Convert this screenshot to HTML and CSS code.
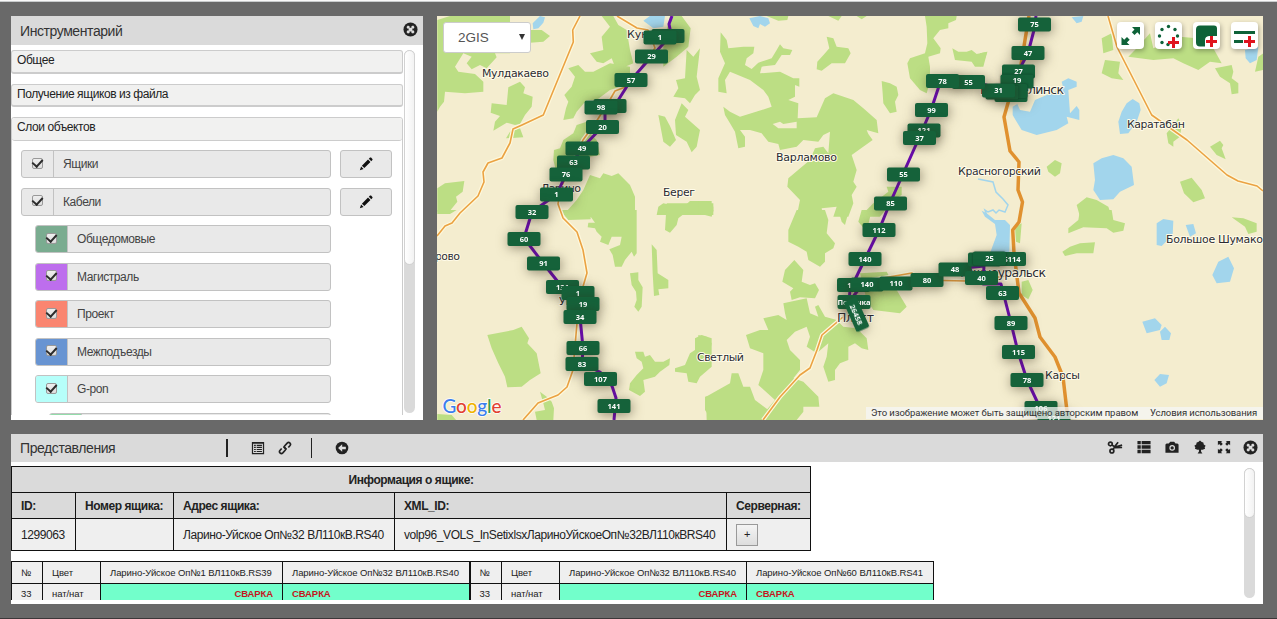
FILE: index.html
```html
<!DOCTYPE html>
<html lang="ru">
<head>
<meta charset="utf-8">
<title>Инструментарий</title>
<link rel="stylesheet" href="styles.css">
</head>
<body>
<svg class="defs" width="0" height="0">
  <defs>
    <symbol id="i-close" viewBox="0 0 16 16"><circle cx="8" cy="8" r="7.500"/><path fill="#dedede" d="M5.200 3.800 7 4.400V6h2V4.400L10.800 3.800 12.200 5.200 11.600 7H10v2h1.600L12.200 10.800 10.800 12.200 9 11.600V10H7v1.600L5.200 12.200 3.800 10.800 4.400 9H6V7H4.400L3.800 5.200z"/></symbol>
    <symbol id="i-pencil" viewBox="0 0 16 16"><path d="M1 15l1.400-4.200 2.800 2.800zM3.300 9.900 10.300 2.900 13.100 5.700 6.100 12.700zM11.200 2 12.600.7q.6-.5 1.200 0l1.500 1.500q.5.6 0 1.200L14 4.800z"/></symbol>
    <symbol id="i-listalt" viewBox="0 0 16 16"><path fill-rule="evenodd" d="M1 1h14v14H1zM2.400 3v10.600h11.200V3z"/><path d="M3.500 4.200h2v1.400h-2zm3 0h6v1.400h-6zM3.500 6.600h2V8h-2zm3 0h6V8h-6zM3.500 9h2v1.400h-2zm3 0h6v1.400h-6zM3.500 11.300h2v1.400h-2zm3 0h6v1.400h-6z"/></symbol>
    <symbol id="i-link" viewBox="0 0 16 16"><g fill="none" stroke="#222" stroke-width="1.900"><path d="M9.800 9.600 8 8.200Q6.600 6.900 7.800 5.400L10.500 2.400Q12 1 13.600 2.300 15 3.700 13.800 5.200L11.800 7.400"/><path d="M6.200 6.400 8 7.800Q9.400 9.100 8.200 10.600L5.500 13.600Q4 15 2.400 13.700 1 12.300 2.200 10.800L4.200 8.600"/></g></symbol>
    <symbol id="i-back" viewBox="0 0 16 16"><circle cx="8" cy="8" r="7.200"/><path fill="#dedede" d="M8.200 3.600v2.900h4.200v3H8.200v2.900L3.500 8z"/></symbol>
    <symbol id="i-cut" viewBox="0 0 18 16"><g fill="none" stroke="#222" stroke-width="1.900"><circle cx="3.800" cy="4" r="2.100"/><circle cx="5.500" cy="12" r="2.200"/><path d="M5.500 5.200 9 7.400 17 5.400M6.800 10.200 9.600 5.800 12.500 2M9 8.200 17 8"/></g></symbol>
    <symbol id="i-list" viewBox="0 0 16 16"><path d="M.5 1h3.800v3.800H.5zm4.800 0H15.500v3.800H5.300zM.5 6.100h3.800v3.800H.5zm4.800 0H15.500v3.800H5.300zM.5 11.200h3.800V15H.5zm4.800 0H15.500V15H5.300z"/></symbol>
    <symbol id="i-camera" viewBox="0 0 16 16"><path d="M.5 5.200 1.800 4H4.300L6 2h4.500L12 4h2.200L15.500 5.200V14.500H.5z"/><circle cx="8.200" cy="9" r="3.200" fill="#dedede"/><circle cx="8.200" cy="9" r="1.900"/></symbol>
    <symbol id="i-tree" viewBox="0 0 16 16"><path d="M8 .5 10 2.200 11.800 2.800 12.300 5 14.500 6.500 13.300 8.300 13.800 10 11 11.200H9.200v1.800l1.500 2.500h-5.400L6.800 13v-1.800H5L2.200 10 2.700 8.300 1.500 6.500 3.700 5 4.200 2.800 6 2.200z"/></symbol>
    <symbol id="i-full" viewBox="0 0 16 16"><path d="M1 1h5L4.600 2.400 6.600 4.500 4.500 6.600 2.400 4.600 1 6zM15 1v5l-1.400-1.400-2.100 2-2.100-2.100 2-2.100L10 1zM1 15v-5l1.400 1.400 2.100-2 2.100 2.100-2 2.100L6 15zM15 15h-5l1.400-1.400-2-2.100 2.100-2.100 2.100 2L15 10z"/></symbol>
    <rect id="t" class="plate" x="-16.500" y="-7" width="33" height="14" rx="2"/>
  </defs>
</svg>

<div class="app">
  <div class="top">
    <section class="panel tools">
      <header class="bar"><h1>Инструментарий</h1><svg class="ic"><use href="#i-close"/></svg></header>
      <div class="scroller">
        <div class="content">
          <div class="acc">Общее</div>
          <div class="acc">Получение ящиков из файла</div>
          <div class="group">
            <div class="acc-head">Слои объектов</div>
            <div class="rows">
              <div class="row"><div class="field"><span class="check"><i class="cb"></i></span><span class="name">Ящики</span></div><span class="edit"><svg><use href="#i-pencil"/></svg></span></div>
              <div class="row"><div class="field"><span class="check"><i class="cb"></i></span><span class="name">Кабели</span></div><span class="edit"><svg><use href="#i-pencil"/></svg></span></div>
              <div class="row sub"><div class="field"><span class="check green"><i class="cb"></i></span><span class="name">Общедомовые</span></div></div>
              <div class="row sub"><div class="field"><span class="check violet"><i class="cb"></i></span><span class="name">Магистраль</span></div></div>
              <div class="row sub"><div class="field"><span class="check coral"><i class="cb"></i></span><span class="name">Проект</span></div></div>
              <div class="row sub"><div class="field"><span class="check blue"><i class="cb"></i></span><span class="name">Межподъезды</span></div></div>
              <div class="row sub"><div class="field"><span class="check aqua"><i class="cb"></i></span><span class="name">G-pon</span></div></div>
              <div class="row subsub"><div class="field"><span class="check mint"></span><span class="name"></span></div></div>
            </div>
          </div>
        </div>
        <div class="track"><div class="thumb"></div></div>
      </div>
    </section>

    <section class="map">
      <svg class="canvas" viewBox="437 16 826 404" width="826" height="404">
        <g class="wood">
          <g transform="translate(430 0) scale(.33333)">
            <path d="M22 60 60 48H240V160H195L200 172 170 205 150 195 125 208 110 190 125 170 100 160 75 200 85 215 135 222 160 245V275L105 280 45 275 42 305 30 320 22 335zM300 90H335L360 108 340 125 300 128zM235 262 270 245 285 262 280 280 308 290 305 320 285 345 270 372 255 375 230 368 190 392 195 365 210 348 182 338 185 310 230 315zM240 395 270 385 280 412 228 415zM480 160 520 150 515 110 540 80 515 48H550L565 75 590 90 600 150 610 190 575 205 555 200 545 175 520 190 500 185zM415 205 445 195 465 215 490 215 540 190 600 200V250L540 270 500 300 470 300 440 335 430 355 400 360 408 325 415 305 403 285 425 260 435 230zM720 48H755L782 85 775 140 740 170 700 200V130zM770 150 790 170 810 145 800 230 810 270 795 285 780 310 765 295 730 290 745 265 738 240 765 235zM685 345 705 350 720 378 738 420 720 440 700 425zM738 405 735 360 755 310 775 330 765 350 810 390 800 440 785 457 770 425zM372 450 390 445 400 420 430 400 440 375 470 365 480 400 500 420 510 465 480 470 440 520 380 520 370 480zM22 565 45 550 103 543 98 575 78 590 82 605 60 632 22 635zM480 525 510 535 520 520 545 528 565 520 600 555 615 590V645H400L440 600 460 570zM685 620 700 610 735 618 770 612 780 603H845V645H680z"/>
          </g>
          <g transform="translate(430 210) scale(.33333)">
            <path d="M390 0H620V130L612 140 605 125 585 150 575 170H555L548 135 538 118 570 105 575 80 545 80 535 105 510 95 515 80 500 65 495 55 473 52 475 38 495 38 482 20V28L415 30zM22 0H80L60 12H22zM710-20 850-20V5L790 10 770 5 745 25 740 45 720 68 705 60zM665 103 680 120 683 190 715 210V235L685 238 688 255 672 258 668 190zM600 190 625 187V210L638 232 635 290 625 305 613 290 620 270 618 245 605 225zM172 375 250 360 275 350 297 385 292 400 320 430 332 490 300 510 275 530 232 532 225 500 205 460 185 415zM615 425 640 425 645 440 660 435 675 455 700 455 720 445 718 465 690 485 675 500 640 510 645 545 630 558 597 540 600 520 620 495 640 475 635 455 620 445zM735 475 765 465 780 430 795 420V385L815 375 845 385V470L810 500 800 520 775 515 770 490 735 485zM330 545 350 560 365 575 372 595 370 630H320L315 605 345 600 340 580zM22 612 65 615 80 632H22zM825 560 845 556V630L825 600z"/>
          </g>
          <g transform="translate(700 0) scale(.33333)">
            <path d="M200 48H265L262 60 235 62zM385 48H425L415 62zM470 48H500L485 58zM62 97 80 120 85 145 130 140H163L160 160 140 175 135 195 155 207 175 188 215 175 230 150 240 133 250 145 277 150 270 165 245 165 225 195 185 200 180 220 240 215 280 235 298 235V260L285 255V290L265 300 295 310 293 355 350 352 375 295 400 280 460 300 490 325 530 360 535 400 500 390 505 402 518 420 455 465 470 510 460 545 470 560 455 585 460 610 445 650H400L410 620 365 625 370 650H290L300 600 262 560 265 535 330 480 345 445 370 440 385 460 390 395 370 405 355 425 310 420 290 440 240 450 235 432 205 425 185 400 150 390 120 390 135 410V440L115 445 105 395 90 370 75 345 70 320 90 335 120 350 185 330 215 320 205 290 190 270 150 240 90 215 75 240 80 280 55 275 55 235 75 190 60 155zM380 110 400 115 410 140 445 145 452 160 435 190 395 190 365 212 350 208 352 185 375 160 388 145zM545 243 570 250 590 260 595 285 585 305 590 335 570 340 550 310 548 280zM675 48H770L768 60 745 70V85L720 90 700 115 722 145 720 160 685 170 690 200V245L680 280 660 270 630 235 622 190 630 175 675 160 682 130 680 80zM757 145 775 155 800 155 815 150 830 162 862 155 850 200 825 200 815 185 765 180zM520 610 565 575 560 560 605 560V585L580 600 540 650H480zM-5 605 20 603 40 620V645H-5z"/>
            <path class="land" d="M218 372 240 365 250 372 290 365V385H235z"/>
          </g>
          <g transform="translate(700 210) scale(.33333)">
            <path d="M290 0H375L385 30 380 70 405 100 400 115 375 130 375 155 360 170 325 150 320 125 295 110 265 95V60zM415 0H447L435 45 425 35zM-5 0H40L35 20-5 10zM485 0H515L500 65 475 35zM283 150 310 180 305 215 330 225 345 220 357 240 345 265 300 262 275 270 270 245 280 235 247 215 255 180zM250 280 320 265 330 310 355 320 345 290 355 285 375 320 410 330 430 350 470 355 500 385 505 420 485 415 465 400 445 410V450L420 460 405 480V510L385 515 370 470 380 440 385 400 350 430 320 410 330 380 320 350 285 365 260 390 270 420 300 450V480L280 505 310 515 355 560 358 590 310 590 310 605 290 630H190L200 600 225 570 175 525 190 480 190 430 150 415 138 375 180 360 205 360 190 325 235 315 260 330 255 310zM18 560 90 520 95 490H115L130 530H150L165 570 205 600 185 630H20zM-5 375 20 380 35 400 30 425-5 430zM480 190 560 185 590 240 620 290 600 310 520 300 500 270z"/>
          </g>
          <g transform="translate(980 0) scale(.33333)">
            <path d="M0 160 22 155 10 190 0 200zM365 115 395 100 400 150 370 160zM375 180 420 185 415 220 430 240 395 235 365 220zM445 170 470 145 510 100 520 145 600 110 650 115 700 145 725 190 690 185 655 210 610 190 580 175 520 180zM705 205 755 195 760 215 755 235 775 250V280L755 283 750 250 720 230zM835 170 850 160V210L825 215zM690 440 720 422 730 435 725 445 737 478 710 465zM600 545 635 533 665 570 675 595 640 607 612 580zM200 500 225 480 245 490 240 520 225 530 205 515zM290 615 320 592 350 600 385 620 395 650H300zM560 400 580 375 595 355 605 375 600 410 580 425V440L565 430z"/>
          </g>
          <g transform="translate(980 210) scale(.33333)">
            <path d="M300 0H395L400 30 435 40 430 62 400 68 380 55 310 52 265 70V55L295 30zM247 125 270 110 300 100 345 97 340 130 290 130 255 138zM755 22 790 25 830 40V65L805 72 795 50zM125 215 145 210 158 240 145 268 125 255zM105 50 125 40 120 100 108 95z"/>
          </g>
        </g>
        <g class="water">
          <path transform="translate(430 0) scale(.33333)" d="M310 88 308 70 330 48 345 52 340 68 325 85zM640 62 660 48H705L700 80 670 85z"/>
          <path transform="translate(700 0) scale(.33333)" d="M148 55 180 48 205 55 210 70 195 80 180 72 175 85 160 78z"/>
          <path transform="translate(980 0) scale(.33333)" d="M275 52 310 48 305 65 290 70zM795 150 835 140 830 180 810 190 797 175zM98 320 112 312 120 330 150 335 165 300 200 285 250 265 245 245 265 235 290 245V260L265 270 270 340 290 318 298 330V360L260 350 265 370 230 390 170 405 125 390 108 362 98 345zM440 310 458 297 478 310 482 330 470 365 445 400 420 402 415 365 425 335zM340 490 365 475 400 465 430 475 455 500 462 555 420 575 400 598 360 600 340 570 345 540z"/>
          <path transform="translate(980 210) scale(.33333)" d="M530 40 550 27 580 32 578 75 545 108 530 105zM617 45 640 42 648 70 630 80zM697 195 715 155 745 140 762 175 750 215 710 220zM487 335 525 325 545 345 540 360 500 370zM540 365 555 350 573 370 568 390 545 390zM523 510 540 492 567 495 560 520 540 530zM5 2 20 10 45 30 75 30 90 45 88 130 30 130 50 75 45 42 15 20z"/>
          <path class="river" d="M978 179 993 182 996 192 1003 199 1008 205 1005 212 999 210 996 213 993 210 988 212 985 210 987 216"/>
        </g>
        <g>
          <path class="casing" d="M580 16 572.700 30 573.300 42 543.300 115 522 125 513 129 510 143 502 158 488 163 483 172 484 182 478 196 460 213 452 223 445 226 437 236M617 16 637 28 648 30 655 48 628 86 615 91 608 103 596 122 583 140 560 190 558 204 563 218 577 232 583 250 587 273 582 290M577 323 573 370 567 387 558 395 538 403 523 420M843 317 822 335 817 350 810 368 800 375 780 397 763 420M852 292 860 282 912 273 920 280 966 281 1015 275M1108 16 1117 47 1151.700 115 1187 140 1227 175 1238 181 1257 186 1263 191"/>
          <path class="road" d="M580 16 572.700 30 573.300 42 543.300 115 522 125 513 129 510 143 502 158 488 163 483 172 484 182 478 196 460 213 452 223 445 226 437 236M617 16 637 28 648 30 655 48 628 86 615 91 608 103 596 122 583 140 560 190 558 204 563 218 577 232 583 250 587 273 582 290M577 323 573 370 567 387 558 395 538 403 523 420M843 317 822 335 817 350 810 368 800 375 780 397 763 420M852 292 860 282 912 273 920 280 966 281 1015 275M1108 16 1117 47 1151.700 115 1187 140 1227 175 1238 181 1257 186 1263 191"/>
          <path class="highway" d="M1029 16 1025 40 1021 65 1008 103 1004 117 1010 151 1019 162 1018 190 1022.500 202 1019 222 1012.700 230 1014 253 1019 293 1035 318 1040 337 1055 357 1063 377 1068 420"/>
        </g>
        <g class="place">
          <text x="482" y="77" textLength="67">Мулдакаево</text><text x="627" y="37.500">Кунашак</text><text x="541" y="191.500" textLength="40">Ларино</text><text x="663" y="196" textLength="32">Берег</text><text x="435" y="260" textLength="25">рово</text><text x="559" y="305">Уйское</text><text x="776" y="160.500" textLength="61">Варламово</text><text x="697" y="361" textLength="47">Светлый</text><text x="958" y="174.500" textLength="83">Красногорский</text><text x="1127" y="127.500" textLength="58">Каратабан</text><text x="1166" y="243" textLength="97">Большое Шумако</text><text x="1045" y="379" textLength="35">Карсы</text>
          <g class="city"><text x="837" y="322" textLength="37">Пласт</text><text x="980" y="94" textLength="84">Еманжелинск</text><text x="960" y="277" textLength="86">Южноуральск</text></g>
        </g>
        <path class="route" d="M672 16 669 24 671 34 663 44 652 56 631 80 617 102 605 112V124L582 148 566 174 557 194 532 212 524 238 543 263 562 287 580 317 583 348 582 364 600 372 612 386 616 398 614 420M1036 16 1034 30 1028 53 1018 72 1000 89 968 80 942 77 931 110 919 138 903 174 890 203 879 230 865 259 850 290 849 302 862 285 927 280 955 269 984 266 983 284H1001L1011 323 1018 352 1027 380 1042 412"/>
        <g class="tags">
          <g transform="translate(668 36)"><use href="#t"/></g>
          <g transform="translate(660 37.500)"><use href="#t"/><text>1</text></g>
          <g transform="translate(651.500 56.500)"><use href="#t"/><text>29</text></g>
          <g transform="translate(631 80)"><use href="#t"/><text>57</text></g>
          <g transform="translate(610 106)"><use href="#t"/></g>
          <g transform="translate(601 107.500)"><use href="#t"/><text>98</text></g>
          <g transform="translate(602.500 127)"><use href="#t"/><text>20</text></g>
          <g transform="translate(582 148.500)"><use href="#t"/><text>49</text></g>
          <g transform="translate(573.500 162.500)"><use href="#t"/><text>63</text></g>
          <g transform="translate(566 174.500)"><use href="#t"/><text>76</text></g>
          <g transform="translate(556.500 194.500)"><use href="#t"/><text>1</text></g>
          <g transform="translate(532 212)"><use href="#t"/><text>32</text></g>
          <g transform="translate(524 239)"><use href="#t"/><text>60</text></g>
          <g transform="translate(543.500 263.500)"><use href="#t"/><text>91</text></g>
          <g transform="translate(562.500 287)"><use href="#t"/><text>131</text></g>
          <g transform="translate(578 293)"><use href="#t"/><text>1</text></g>
          <g transform="translate(583 304)"><use href="#t"/><text>19</text></g>
          <g transform="translate(580 317)"><use href="#t"/><text>34</text></g>
          <g transform="translate(583 348)"><use href="#t"/><text>66</text></g>
          <g transform="translate(582 364)"><use href="#t"/><text>83</text></g>
          <g transform="translate(600.500 379)"><use href="#t"/><text>107</text></g>
          <g transform="translate(614 406)"><use href="#t"/><text>141</text></g>
          <g transform="translate(1034.500 24.500)"><use href="#t"/><text>75</text></g>
          <g transform="translate(1028 53)"><use href="#t"/><text>47</text></g>
          <g transform="translate(1018.500 71.500)"><use href="#t"/><text>27</text></g>
          <g transform="translate(1011 95)"><use href="#t"/></g>
          <g class="flat" transform="translate(1017 81.500)"><use href="#t"/><text y="-1">19</text></g>
          <g class="flat" transform="translate(1011 91)"><use href="#t"/></g>
          <g class="flat" transform="translate(1002 92.500)"><use href="#t"/></g>
          <g transform="translate(998.500 90.500)"><use href="#t"/><text>31</text></g>
          <g transform="translate(968.500 82)"><use href="#t"/><text>55</text></g>
          <g transform="translate(942.500 81)"><use href="#t"/><text>78</text></g>
          <g transform="translate(931.500 110)"><use href="#t"/><text>99</text></g>
          <g transform="translate(924 130.500)"><use href="#t"/><text>121</text></g>
          <g transform="translate(919.500 138)"><use href="#t"/><text>37</text></g>
          <g transform="translate(903.500 174.500)"><use href="#t"/><text>55</text></g>
          <g transform="translate(890.500 203.500)"><use href="#t"/><text>85</text></g>
          <g transform="translate(879 230)"><use href="#t"/><text>112</text></g>
          <g transform="translate(865 259)"><use href="#t"/><text>140</text></g>
          <g transform="translate(853.500 285)"><use href="#t"/><text x="-4">1</text></g>
          <g transform="translate(867 284.500)"><use href="#t"/><text>140</text></g>
          <g transform="translate(896 283.500)"><use href="#t"/><text>110</text></g>
          <g transform="translate(927 280)"><use href="#t"/><text>80</text></g>
          <g transform="translate(955 269.500)"><use href="#t"/><text>48</text></g>
          <g transform="translate(1009.500 259)"><use href="#t"/><text x="2.500">5114</text></g>
          <g transform="translate(984.500 259.500)"><use href="#t"/></g>
          <g class="flat" transform="translate(989.500 258.500)"><use href="#t"/><text>25</text></g>
          <g transform="translate(981.500 278)"><use href="#t"/><text>40</text></g>
          <g transform="translate(1002.500 293)"><use href="#t"/><text>63</text></g>
          <g transform="translate(1011 323)"><use href="#t"/><text>89</text></g>
          <g transform="translate(1018.500 352)"><use href="#t"/><text>115</text></g>
          <g transform="translate(1027 380)"><use href="#t"/><text>78</text></g>
          <g transform="translate(1041 408)"><use href="#t"/><text>106</text></g>
          <g transform="translate(1054 418)"><use href="#t"/><text>121</text></g>
          <g transform="translate(854 302)"><use href="#t"/><text textLength="33">Полочка</text></g>
          <g transform="translate(856.500 314.500) rotate(66)"><use href="#t"/><text>26458</text></g>
        </g>
        <g class="logo"><text x="442.500" y="413" textLength="59"><tspan fill="#3b7ded">G</tspan><tspan fill="#e2412f">o</tspan><tspan fill="#f0b400">o</tspan><tspan fill="#3b7ded">g</tspan><tspan fill="#2f9e4f">l</tspan><tspan fill="#e2412f">e</tspan></text></g>
      </svg>
      <div class="over controls">
        <div class="select"><span>2GIS</span><i></i></div>
        <div class="buttons">
          <span class="mb"><svg viewBox="0 0 27 27"><path fill="#0e6238" d="M23 5v8L20.300 10.300 17.500 13 14.800 10.300 17.500 7.600 15 5zM4.500 23v-8L7.200 17.700 10 15 12.700 17.700 9.900 20.400 12.500 23z"/></svg></span>
          <span class="mb"><svg viewBox="0 0 27 27"><g fill="#0e6238"><circle cx="13.500" cy="4.500" r="1.700"/><circle cx="7" cy="7.500" r="1.700"/><circle cx="20" cy="7.500" r="1.700"/><circle cx="4.500" cy="14" r="1.700"/><circle cx="22.500" cy="14" r="1.700"/><circle cx="7" cy="20.500" r="1.700"/><circle cx="13" cy="22.500" r="1.700"/></g><path class="plus" d="M13 20.500h11M18.500 15v11"/></svg></span>
          <span class="mb"><svg viewBox="0 0 27 27"><path fill="#0e6238" d="M7 3.500H21Q24 3.500 24 6.500V14H16Q12 14.500 12 18V24.500H7Q3 24.500 3 20.500V7.500Q3 3.500 7 3.500z"/><path class="plus" d="M13 19.500h11M18.500 14v11"/></svg></span>
          <span class="mb"><svg viewBox="0 0 27 27"><path stroke="#0e6238" stroke-width="3" d="M3 10.500H24M3 19.500h9"/><path class="plus" d="M13 19.500h11M18.500 14v11"/></svg></span>
        </div>
      </div>
      <div class="over copyright"><span class="c1">Это изображение может быть защищено авторским правом</span><span class="c2">Условия использования</span></div>
    </section>
  </div>

  <section class="panel views">
    <header class="bar">
      <div class="left"><h1>Представления</h1><i class="sep s1"></i><svg class="ic"><use href="#i-listalt"/></svg><svg class="ic link"><use href="#i-link"/></svg><i class="sep s2"></i><svg class="ic"><use href="#i-back"/></svg></div>
      <div class="right"><svg class="ic wide"><use href="#i-cut"/></svg><svg class="ic"><use href="#i-list"/></svg><svg class="ic"><use href="#i-camera"/></svg><svg class="ic"><use href="#i-tree"/></svg><svg class="ic near"><use href="#i-full"/></svg><svg class="ic big"><use href="#i-close"/></svg></div>
    </header>
    <div class="body">
      <div class="tables">
        <table class="info">
          <colgroup><col class="w64"><col class="w98"><col class="w221"><col class="w332"><col class="w84"></colgroup>
          <tr><th colspan="5" class="title">Информация о ящике:</th></tr>
          <tr><th>ID:</th><th>Номер ящика:</th><th>Адрес ящика:</th><th>XML_ID:</th><th>Серверная:</th></tr>
          <tr class="data"><td>1299063</td><td></td><td>Ларино-Уйское Оп№32 ВЛ110кВ.RS40</td><td>volp96_VOLS_InSetixlsxЛариноУйскоеОп№32ВЛ110кВRS40</td><td><span class="add">+</span></td></tr>
        </table>
        <table class="fibers">
          <colgroup><col class="w31"><col class="w58"><col class="w182"><col class="w187"><col class="w32"><col class="w58"><col class="w187"><col class="w187"></colgroup>
          <tr><td>№</td><td>Цвет</td><td>Ларино-Уйское Оп№1 ВЛ110кВ.RS39</td><td class="end">Ларино-Уйское Оп№32 ВЛ110кВ.RS40</td><td>№</td><td>Цвет</td><td>Ларино-Уйское Оп№32 ВЛ110кВ.RS40</td><td>Ларино-Уйское Оп№60 ВЛ110кВ.RS41</td></tr>
          <tr class="last"><td>33</td><td>нат/нат</td><td class="weld r">СВАРКА</td><td class="weld end">СВАРКА</td><td>33</td><td>нат/нат</td><td class="weld r">СВАРКА</td><td class="weld">СВАРКА</td></tr>
        </table>
      </div>
      <div class="track"><div class="thumb"></div></div>
    </div>
  </section>
</div>
</body>
</html>
```
FILE: styles.css
```css
* { box-sizing: border-box; }
body {
  margin: 0;
  font-family: "Liberation Sans", Arial, sans-serif;
  font-size: 12px;
  letter-spacing: -.42px;
  color: #333;
}
.defs { position: absolute; }
.app {
  width: 1277px;
  height: 619px;
  background: #696969;
  border-top: 1px solid #fafafa;
  border-bottom: 1px solid #3c3739;
  box-shadow: inset 0 1px #c9cccd;
  padding: 15px 14px 14px 11px;
  display: flex;
  flex-direction: column;
  gap: 14px;
  overflow: hidden;
}
.top { display: flex; gap: 14px; height: 404px; }
.panel { background: #fff; display: flex; flex-direction: column; overflow: hidden; }
.tools { width: 412px; }
.views { height: 171px; }
.bar {
  height: 29px;
  flex: none;
  background: #dadada;
  display: flex;
  align-items: center;
  justify-content: space-between;
  padding: 0 5px 0 9px;
}
.views .bar { height: 28px; }
.bar h1 { margin: 0; font-size: 14px; font-weight: 400; width: 102px; white-space: nowrap; }
.views h1 { width: 95px; }
.ic { width: 14px; height: 14px; fill: #222; }
.tools .ic { width: 15px; height: 15px; margin-top: -2px; }
.left, .right { display: flex; align-items: center; }
.sep { width: 1.500px; height: 18px; background: #222; }
.s1 { margin: 0 23px 0 111px; }
.s2 { margin: 0 23px 0 19px; height: 20px; }
.link { margin-left: 13px; }
.right { gap: 14px; margin-top: -2px; }
.wide { width: 16px; height: 15px; }
.near { margin-left: -4px; }
.big { width: 15px; height: 15px; margin-left: -2px; }

.scroller { display: flex; height: 370px; padding: 5px 8px 0 0; gap: 1px; }
.content { width: 392px; height: 365px; overflow: hidden; }
.acc, .acc-head {
  height: 23.500px;
  background: #f1f1f0;
  border: 1px solid #ccc;
  border-radius: 3px;
  padding: 2px 5px;
  line-height: 15px;
  color: #222;
}
.acc { margin-bottom: 10px; border-bottom-width: 2px; }
.group { border: 1px solid #ccc; border-radius: 3px; height: 420px; }
.acc-head { border-width: 0 0 1px; height: 23px; }
.rows { padding: 9px 9px; display: flex; flex-direction: column; gap: 9.500px; }
.row { display: flex; gap: 9px; height: 28px; color: #444; }
.field { width: 310px; display: flex; border: 1px solid #c2c2c2; border-radius: 3px; background: #e9e9e9; overflow: hidden; }
.sub { padding-left: 14px; }
.sub .field { width: 296px; }
.subsub { padding-left: 28px; }
.subsub .field { width: 282px; }
.check { width: 32px; border-right: 1px solid #c2c2c2; display: flex; align-items: center; justify-content: center; }
.name { padding: 6px 9px; line-height: 14px; }
.green { background: #7aac90; }
.violet { background: #bd6eed; }
.coral { background: #fa8570; }
.blue { background: #6894d2; }
.aqua { background: #b6fffa; }
.mint { background: #93dcaa; }
.cb {
  width: 11px;
  height: 11px;
  margin-top: -2px;
  border: 1px solid #999;
  border-radius: 2px;
  background: linear-gradient(#eee, #ddd);
  display: flex;
  align-items: center;
  justify-content: center;
}
.cb::after {
  content: "";
  flex: none;
  width: 5px;
  height: 8px;
  margin-top: -2px;
  border: solid #2b2b2b;
  border-width: 0 2.500px 2.500px 0;
  transform: rotate(42deg);
}
.edit { width: 52px; border: 1px solid #c2c2c2; border-radius: 3px; background: #e9e9e9; display: flex; align-items: center; justify-content: center; }
.edit svg { width: 14px; height: 14px; fill: #111; }
.track { width: 11px; border-radius: 6px; background: #dadada; }
.tools .track { height: 363px; }
.thumb { height: 215px; border: 1px solid #d2d2d2; border-radius: 6px; background: linear-gradient(90deg, #fff, #f2f2f2); }

.map { position: relative; width: 826px; height: 404px; background: #f4edcf; overflow: hidden; letter-spacing: 0; }
.canvas { display: block; }
.wood { fill: #bcde84; }
.land { fill: #f4edcf; }
.water { fill: #a2d5ec; }
.river { fill: none; stroke: #a2d5ec; stroke-width: 1.500; }
.casing, .road, .highway, .route { fill: none; stroke-linejoin: round; }
.casing { stroke: #fdf8dc; stroke-width: 4; }
.road { stroke: #eba242; stroke-width: 1.600; }
.highway { stroke: #e0912f; stroke-width: 3.500; }
.route { stroke: #6a0bb0; stroke-width: 3; }
.place { font: 11px "DejaVu Sans", sans-serif; fill: #2b2b33; }
.place text { paint-order: stroke; stroke: #fffbe8; stroke-width: 2px; stroke-linejoin: round; }
.city { font-size: 12.500px; }
.plate { fill: #15623a; }
.tags > g { filter: drop-shadow(1px 2px 6px rgba(50, 40, 20, .5)); }
.tags > .flat { filter: drop-shadow(0 0 1px rgba(0, 0, 0, .35)); }
.tags text { font: bold 7.500px "Open Sans", sans-serif; fill: #fff; text-anchor: middle; transform: translateY(2.500px); }
.logo { font: 500 19px Lato, sans-serif; }
.logo text { paint-order: stroke; stroke: #fff; stroke-width: 1.500px; }
.over { position: absolute; display: flex; }
.controls { top: 6px; left: 6px; right: 5px; justify-content: space-between; }
.select {
  width: 88px;
  height: 31px;
  background: #fff;
  border: 1px solid #ccc;
  border-radius: 3px;
  padding: 0 5px 0 14px;
  display: flex;
  align-items: center;
  justify-content: space-between;
  font-size: 13.500px;
  color: #555;
}
.select i { border: 3px solid transparent; border-top: 6px solid #333; border-bottom: 0; margin-top: -2px; }
.buttons { display: flex; gap: 11px; }
.mb { width: 27px; height: 27px; border-radius: 4px; background: #fff; box-shadow: 1px 2px 5px rgba(0, 0, 0, .3); }
.mb svg { display: block; width: 27px; height: 27px; }
.plus { stroke: #e0141e; stroke-width: 3; }
.copyright { right: 0; bottom: 1px; height: 12px; background: rgba(245, 245, 245, .75); font: 9.500px/12px Roboto, sans-serif; color: #333; white-space: nowrap; padding: 0 6px 0 5px; gap: 12px; }
.c1 { width: 267px; letter-spacing: -.07px; }
.c2 { width: 107px; letter-spacing: -.09px; }

.body { display: flex; justify-content: space-between; height: 138px; padding: 4px 8px 0 0; }
.tables { width: 940px; overflow: hidden; }
.body .track { height: 130px; margin-top: 2px; }
.body .thumb { height: 50px; }
table { border-collapse: collapse; table-layout: fixed; color: #222; }
td, th { border: 1px solid #111; padding: 0 9px; text-align: left; white-space: nowrap; background: #efefef; }
.info { width: 799px; }
.info tr { height: 26px; }
.info th { background: #dadada; }
.info .title { text-align: center; }
.info .data { height: 32px; }
.fibers { width: 922px; margin-top: 10px; font-size: 9.500px; letter-spacing: -.08px; }
.fibers tr { height: 22px; }
.fibers .last td { padding-bottom: 2px; }
.fibers .end { border-right-width: 2px; }
.fibers .weld { background: #72ffcb; color: #c4161c; font-weight: 700; }
.r { text-align: right; }
.add { display: inline-block; width: 22px; height: 22px; border: 1px solid #999; background: linear-gradient(#f4f4f4, #ddd); text-align: center; line-height: 19px; font-size: 11px; vertical-align: middle; }
.w64 { width: 64px; } .w98 { width: 98px; } .w221 { width: 221px; } .w332 { width: 332px; } .w84 { width: 84px; }
.w31 { width: 31px; } .w58 { width: 58px; } .w182 { width: 182px; } .w32 { width: 32px; } .w187 { width: 187px; }
```
